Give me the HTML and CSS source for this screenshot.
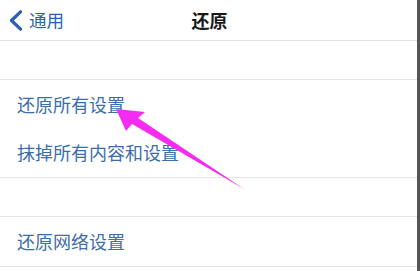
FILE: index.html
```html
<!DOCTYPE html>
<html lang="zh-CN">
<head>
  <meta charset="UTF-8">
  <meta name="viewport" content="width=device-width, initial-scale=1.0">
  <title>还原</title>
  <link rel="stylesheet" href="styles.css">
</head>
<body>
  <div class="screen">
    <div class="page">
      <div class="nav">
        <a href="#" class="back">
          <svg class="chev" width="15" height="21" viewBox="0 0 15 21">
            <path d="M12.5 1.8 L3.5 10.5 L12.5 19.2" fill="none" stroke="#2c5fb3" stroke-width="3.2" stroke-linecap="round" stroke-linejoin="round"/>
          </svg>
          通用
        </a>
        <div class="title">还原</div>
      </div>
      <div class="gap"></div>
      <ul class="group">
        <li class="row">还原所有设置</li>
        <li class="row">抹掉所有内容和设置</li>
      </ul>
      <div class="gap"></div>
      <ul class="group">
        <li class="row">还原网络设置</li>
      </ul>
      <div class="rest"></div>
    </div>
    <div class="edge"></div>
    <!-- 箭头标注 -->
    <svg class="arrow" width="420" height="271" viewBox="0 0 420 271">
      <polygon points="116,109 145,112 138,118 244,189 132,124 126,131" fill="#f52cf0"/>
    </svg>
  </div>
</body>
</html>
```

FILE: styles.css
```css
*{
  margin: 0;
  padding: 0;
}
body{
  background: #fff;
  font-family: "Noto Sans CJK SC", "Noto Sans", sans-serif;
}
a{
  text-decoration: none;
}
.screen{
  position: relative;
  display: flex;
  width: 420px;
  height: 271px;
  overflow: hidden;
}
.page{
  flex: 1;
  display: flex;
  flex-direction: column;
}
.edge{
  width: 3px;
  background: #555;
}
.nav{
  position: relative;
  height: 40px;
  display: flex;
  align-items: center;
  justify-content: center;
  border-bottom: 1px solid #e2e2e2;
}
.back{
  position: absolute;
  left: 8px;
  top: 9px;
  display: flex;
  align-items: center;
  gap: 6px;
  color: #2c5fb3;
  font-size: 17.5px;
  line-height: 22px;
}
.title{
  font-size: 18px;
  font-weight: bold;
  color: #1a1a1a;
  line-height: 40px;
  margin-left: 2px;
}
.gap{
  height: 38px;
  border-bottom: 1px solid #e6e6e6;
}
.group{
  list-style: none;
  border-bottom: 1px solid #e6e6e6;
}
.row{
  height: 49px;
  line-height: 49px;
  padding-left: 17px;
  font-size: 18px;
  color: #3c6eab;
}
.group .row:nth-child(2){
  height: 48px;
  line-height: 46px;
}
.rest{
  flex: 1;
}
.arrow{
  position: absolute;
  left: 0;
  top: 0;
}
```
